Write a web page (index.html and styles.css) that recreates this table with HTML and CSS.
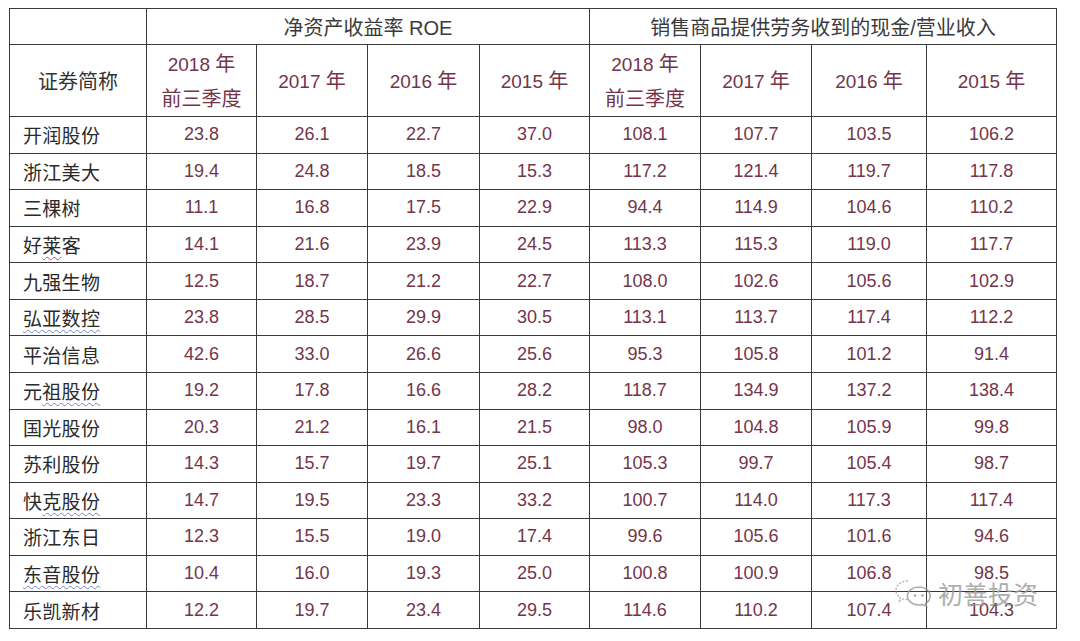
FILE: index.html
```html
<!DOCTYPE html>
<html lang="zh-CN">
<head>
<meta charset="utf-8">
<title>ROE</title>
<link rel="stylesheet" href="styles.css">
</head>
<body>
<div class="page">
  <table class="data">
    <colgroup>
      <col class="c-name"><col class="c1"><col class="c2"><col class="c3"><col class="c4"><col class="c5"><col class="c6"><col class="c7"><col class="c8">
    </colgroup>
    <thead>
      <tr class="h1">
        <th class="blank"></th>
        <th colspan="4" class="grp">净资产收益率 ROE</th>
        <th colspan="4" class="grp">销售商品提供劳务收到的现金/营业收入</th>
      </tr>
      <tr class="h2">
        <th class="namehead">证券简称</th>
        <th class="yr">2018 <span class="cj">年</span><br><span class="cj">前三季度</span></th>
        <th class="yr">2017 <span class="cj">年</span></th>
        <th class="yr">2016 <span class="cj">年</span></th>
        <th class="yr">2015 <span class="cj">年</span></th>
        <th class="yr">2018 <span class="cj">年</span><br><span class="cj">前三季度</span></th>
        <th class="yr">2017 <span class="cj">年</span></th>
        <th class="yr">2016 <span class="cj">年</span></th>
        <th class="yr">2015 <span class="cj">年</span></th>
      </tr>
    </thead>
    <tbody>
      <tr><td class="name">开润股份</td><td>23.8</td><td>26.1</td><td>22.7</td><td>37.0</td><td>108.1</td><td>107.7</td><td>103.5</td><td>106.2</td></tr>
      <tr><td class="name">浙江美大</td><td>19.4</td><td>24.8</td><td>18.5</td><td>15.3</td><td>117.2</td><td>121.4</td><td>119.7</td><td>117.8</td></tr>
      <tr><td class="name">三棵树</td><td>11.1</td><td>16.8</td><td>17.5</td><td>22.9</td><td>94.4</td><td>114.9</td><td>104.6</td><td>110.2</td></tr>
      <tr><td class="name">好<span class="wavy-red">莱</span>客</td><td>14.1</td><td>21.6</td><td>23.9</td><td>24.5</td><td>113.3</td><td>115.3</td><td>119.0</td><td>117.7</td></tr>
      <tr><td class="name">九强生物</td><td>12.5</td><td>18.7</td><td>21.2</td><td>22.7</td><td>108.0</td><td>102.6</td><td>105.6</td><td>102.9</td></tr>
      <tr><td class="name"><span class="wavy-blue">弘亚数控</span></td><td>23.8</td><td>28.5</td><td>29.9</td><td>30.5</td><td>113.1</td><td>113.7</td><td>117.4</td><td>112.2</td></tr>
      <tr><td class="name">平治信息</td><td>42.6</td><td>33.0</td><td>26.6</td><td>25.6</td><td>95.3</td><td>105.8</td><td>101.2</td><td>91.4</td></tr>
      <tr><td class="name">元<span class="wavy-blue">祖股份</span></td><td>19.2</td><td>17.8</td><td>16.6</td><td>28.2</td><td>118.7</td><td>134.9</td><td>137.2</td><td>138.4</td></tr>
      <tr><td class="name">国光股份</td><td>20.3</td><td>21.2</td><td>16.1</td><td>21.5</td><td>98.0</td><td>104.8</td><td>105.9</td><td>99.8</td></tr>
      <tr><td class="name">苏利股份</td><td>14.3</td><td>15.7</td><td>19.7</td><td>25.1</td><td>105.3</td><td>99.7</td><td>105.4</td><td>98.7</td></tr>
      <tr><td class="name">快<span class="wavy-blue">克股份</span></td><td>14.7</td><td>19.5</td><td>23.3</td><td>33.2</td><td>100.7</td><td>114.0</td><td>117.3</td><td>117.4</td></tr>
      <tr><td class="name">浙江东日</td><td>12.3</td><td>15.5</td><td>19.0</td><td>17.4</td><td>99.6</td><td>105.6</td><td>101.6</td><td>94.6</td></tr>
      <tr><td class="name"><span class="wavy-blue">东音股份</span></td><td>10.4</td><td>16.0</td><td>19.3</td><td>25.0</td><td>100.8</td><td>100.9</td><td>106.8</td><td>98.5</td></tr>
      <tr><td class="name">乐凯新材</td><td>12.2</td><td>19.7</td><td>23.4</td><td>29.5</td><td>114.6</td><td>110.2</td><td>107.4</td><td>104.3</td></tr>
    </tbody>
  </table>
  <div class="watermark">
    <svg class="wm-logo" width="40" height="30" viewBox="0 0 40 30">
      <path d="M14 3c-7 0-12 4.2-12 9.4 0 3 1.6 5.5 4.2 7.2l-1 3.6 4.2-2.2c1.4.4 3 .6 4.6.6" fill="none" stroke="#a0a0a0" stroke-width="1.4" stroke-dasharray="2 1.6"/>
      <path d="M25 9c-6.6 0-11.6 4-11.6 9s5 9 11.6 9c1.3 0 2.6-.2 3.8-.5l3.8 2-1-3.2c2.8-1.6 4.6-4.2 4.6-7.3 0-5-5-9-11.2-9z" fill="none" stroke="#959595" stroke-width="1.5"/>
      <circle cx="21" cy="17.5" r="1.3" fill="#959595"/>
      <circle cx="28.5" cy="17.5" r="1.3" fill="#959595"/>
    </svg>
    <span class="wm-text">初善投资</span>
  </div>
</div>
</body>
</html>
```

FILE: styles.css
```css
html, body {
  margin: 0;
  padding: 0;
  background: #ffffff;
}

.page {
  position: relative;
  width: 1080px;
  height: 641px;
  padding: 8px 0 0 9px;
  box-sizing: border-box;
  font-family: "Liberation Sans", "Noto Sans CJK SC", sans-serif;
}

.data {
  border-collapse: collapse;
  table-layout: fixed;
  width: 1047px;
  font-size: 18px;
}

.c-name { width: 137px; }
.c1 { width: 110px; }
.c2 { width: 111px; }
.c3 { width: 112px; }
.c4 { width: 110px; }
.c5 { width: 111px; }
.c6 { width: 111px; }
.c7 { width: 115px; }
.c8 { width: 130px; }

.data th,
.data td {
  border: 1px solid #3a3a3a;
  padding: 0;
  text-align: center;
  vertical-align: middle;
  font-weight: normal;
}

.h1 { height: 36px; }
.h2 { height: 72px; }
.data tbody tr { height: 36.57px; }

.grp {
  color: #3a3a3a;
  font-size: 20px;
}

.namehead {
  color: #333333;
  font-family: "Noto Sans CJK SC", sans-serif;
  font-size: 20px;
}

.yr {
  color: #74354a;
  font-size: 19px;
  line-height: 33px;
}

.cj {
  font-family: "Noto Sans CJK SC", sans-serif;
  font-size: 20px;
}

.data td {
  color: #74354a;
}

.data td.name {
  text-align: left;
  padding-left: 13px;
  color: #2a2a2a;
  font-family: "Noto Sans CJK SC", sans-serif;
  font-size: 19px;
  letter-spacing: 0.3px;
}

.wavy-red {
  text-decoration: underline wavy #c0506a;
  text-decoration-thickness: 1px;
  text-underline-offset: 3px;
}

.wavy-blue {
  text-decoration: underline wavy #6f86c8;
  text-decoration-thickness: 1px;
  text-underline-offset: 3px;
}

.watermark {
  position: absolute;
  left: 894px;
  top: 575px;
  display: flex;
  align-items: center;
  gap: 4px;
  opacity: 0.8;
}

.wm-text {
  font-family: "Noto Sans CJK SC", sans-serif;
  font-size: 25px;
  color: #9a9a9a;
}
```
